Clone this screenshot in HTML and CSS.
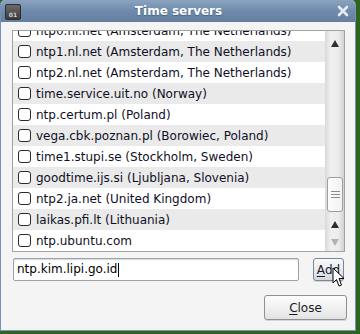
FILE: index.html
```html
<!DOCTYPE html>
<html lang="en">
<head>
    <meta charset="UTF-8">
    <title>Time servers</title>
    <link rel="stylesheet" href="styles.css">
</head>
<body>
    <div class="window">
        <div class="titlebar">
            <div class="appicon"><span>01</span></div>
            <div class="title">Time servers</div>
            <div class="closex">
                <svg width="12" height="12" viewBox="0 0 12 12"><path d="M2 2 L10 10 M10 2 L2 10" stroke="#e4ebf3" stroke-width="2.6" stroke-linecap="round"/></svg>
            </div>
        </div>
        <div class="content">
            <div class="listbox">
                <div class="rows">
                    <div class="row"><span class="check"></span>ntp0.nl.net (Amsterdam, The Netherlands)</div>
                    <div class="row odd"><span class="check"></span>ntp1.nl.net (Amsterdam, The Netherlands)</div>
                    <div class="row"><span class="check"></span>ntp2.nl.net (Amsterdam, The Netherlands)</div>
                    <div class="row odd"><span class="check"></span>time.service.uit.no (Norway)</div>
                    <div class="row"><span class="check"></span>ntp.certum.pl (Poland)</div>
                    <div class="row odd"><span class="check"></span>vega.cbk.poznan.pl (Borowiec, Poland)</div>
                    <div class="row"><span class="check"></span>time1.stupi.se (Stockholm, Sweden)</div>
                    <div class="row odd"><span class="check"></span>goodtime.ijs.si (Ljubljana, Slovenia)</div>
                    <div class="row"><span class="check"></span>ntp2.ja.net (United Kingdom)</div>
                    <div class="row odd"><span class="check"></span>laikas.pfi.lt (Lithuania)</div>
                    <div class="row"><span class="check"></span>ntp.ubuntu.com</div>
                </div>
                <div class="scrollbar">
                    <div class="stepper top"><span class="arrow up"></span></div>
                    <div class="trough">
                        <div class="thumb">
                            <span class="grip"></span>
                            <span class="grip"></span>
                            <span class="grip"></span>
                        </div>
                    </div>
                    <div class="stepper"><span class="arrow up"></span></div>
                    <div class="stepper"><span class="arrow down"></span></div>
                </div>
            </div>
            <div class="addrow">
                <div class="entry">ntp.kim.lipi.go.id<span class="caret"></span></div>
                <div class="btn add"><u>A</u>dd
                    <svg class="cursor" width="13" height="21" viewBox="0 0 13 21"><path d="M1 1 L1 16 L4.5 12.5 L7 19 L9.5 18 L7 11.5 L12 11.5 Z" fill="#fff" stroke="#000" stroke-width="1" stroke-linejoin="round"/></svg>
                </div>
            </div>
            <div class="footer">
                <div class="btn close"><u>C</u>lose</div>
            </div>
        </div>
    </div>
</body>
</html>
```

FILE: styles.css
```css
body {
    margin: 0;
    background-color: #2c6520;
    font-family: 'DejaVu Sans', sans-serif;
}

div.window {
    width: 354px;
    height: 330px;
    background-color: #f4f4f4;
    border: 1px solid #7693b6;
    border-top: none;
    border-radius: 5px 5px 0 0;
    overflow: hidden;
}

/* title bar */
div.window div.titlebar {
    height: 22px;
    display: flex;
    align-items: center;
    background: linear-gradient(#8ba3bf, #6f8aab 50%, #647f9f);
    padding: 0 4px;
}

div.titlebar div.appicon {
    width: 14px;
    height: 14px;
    background: linear-gradient(#6b6b6b, #3c3c3c);
    border: 1px solid #2d2d2d;
    border-radius: 2px;
    margin-top: 2px;
    display: flex;
    align-items: flex-end;
    justify-content: center;
}

div.titlebar div.appicon span {
    font-size: 6px;
    font-weight: bold;
    color: #d0d0d0;
    line-height: 8px;
}

div.titlebar div.title {
    flex: 1;
    text-align: center;
    color: #fff;
    font-weight: bold;
    font-size: 12px;
    text-shadow: 0 1px 1px #45607f;
}

div.titlebar div.closex {
    width: 14px;
    height: 14px;
    display: flex;
    align-items: center;
    justify-content: center;
    margin-right: 1px;
}

/* content */
div.window div.content {
    padding: 8px 0 0 11px;
}

div.content div.listbox {
    width: 331px;
    height: 220px;
    border: 1px solid #a2a2a2;
    background-color: #fff;
    display: flex;
}

div.listbox div.rows {
    width: 312px;
    overflow: hidden;
}

div.listbox div.rows div.row {
    height: 21px;
    display: flex;
    align-items: center;
    padding-left: 5px;
    font-size: 12px;
    color: #0f0f26;
    white-space: nowrap;
}

div.listbox div.rows div.row:first-child {
    margin-top: -11px;
}

div.listbox div.rows div.row.odd {
    background-color: #e9eae9;
}

div.row span.check {
    width: 11px;
    height: 11px;
    border: 1.5px solid #2a2a2a;
    border-radius: 3px;
    background-color: #fff;
    margin-right: 5px;
    flex: none;
}

/* scrollbar */
div.listbox div.scrollbar {
    width: 19px;
    display: flex;
    flex-direction: column;
    background: linear-gradient(to right, #d9d9d9, #efefef 30%, #ececec 70%, #d2d2d2);
}

div.scrollbar div.stepper {
    height: 18px;
    display: flex;
    align-items: center;
    justify-content: center;
}

div.scrollbar div.stepper.top {
    height: 25px;
}

div.scrollbar div.trough {
    flex: 1;
}

div.scrollbar div.thumb {
    margin: 121px 1px 0 2px;
    height: 33px;
    background: linear-gradient(to right, #fdfdfd, #f2f2f2);
    border: 1px solid #9d9d9d;
    border-radius: 3px;
    display: flex;
    flex-direction: column;
    align-items: center;
    justify-content: center;
    gap: 2px;
}

div.thumb span.grip {
    width: 9px;
    height: 1px;
    background-color: #8a8a8a;
}

span.arrow {
    width: 0;
    height: 0;
    border-left: 4.5px solid transparent;
    border-right: 4.5px solid transparent;
}

span.arrow.up {
    border-bottom: 7px solid #2e2e2e;
}

span.arrow.down {
    border-top: 7px solid #b2b2b2;
}

/* entry and buttons */
div.content div.addrow {
    display: flex;
    margin-top: 6px;
    margin-left: 1px;
}

div.addrow div.entry {
    width: 281px;
    height: 21px;
    border: 1px solid #9aa2aa;
    border-radius: 2px;
    background-color: #fff;
    box-shadow: inset 0 1px 1px #d8d8d8;
    font-size: 12px;
    color: #000;
    line-height: 21px;
    padding-left: 3px;
    display: flex;
    align-items: center;
}

div.entry span.caret {
    width: 1px;
    height: 14px;
    background-color: #000;
    margin-left: 1px;
}

div.btn {
    position: relative;
    border: 1px solid #8c9196;
    border-radius: 3px;
    background: linear-gradient(#fdfdfd, #f1f1f1 50%, #e3e3e3);
    box-shadow: 0 1px 0 #d4d4d4;
    font-size: 12px;
    color: #1a1a1a;
    display: flex;
    align-items: center;
    justify-content: center;
}

div.btn u {
    text-decoration-thickness: 1px;
    text-underline-offset: 2px;
}

div.addrow div.btn.add {
    width: 29px;
    height: 21px;
    margin-left: 14px;
    background: linear-gradient(#f6f8fb, #e4e8ee 60%, #d3d8e0);
    border-color: #7d858f;
}

svg.cursor {
    position: absolute;
    left: 18px;
    top: 8px;
}

div.content div.footer {
    display: flex;
    justify-content: flex-end;
    margin-top: 14px;
    padding-right: 8px;
}

div.footer div.btn.close {
    width: 81px;
    height: 23px;
}
```
